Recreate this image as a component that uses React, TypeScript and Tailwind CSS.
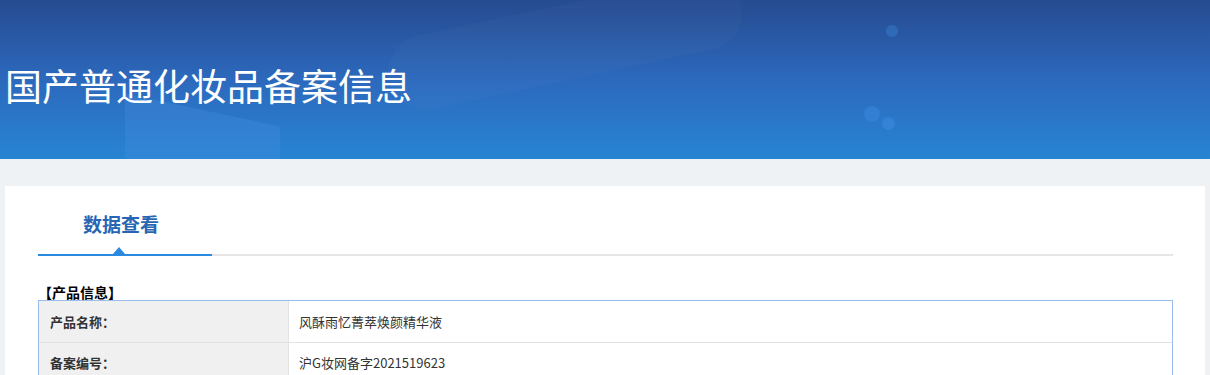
import React from "react";

const rows: [string, string][] = [
  ["产品名称：", "风酥雨忆菁萃焕颜精华液"],
  ["备案编号：", "沪G妆网备字2021519623"],
];

export default function App() {
  return (
    <div
      className="min-h-screen w-[1210px] bg-[#eef2f5]"
      style={{ fontFamily: '"Noto Sans CJK SC", "Noto Sans", sans-serif' }}
    >
      <div className="relative h-[159px] overflow-hidden bg-gradient-to-b from-[#264b90] via-[#2c69bd] to-[#2784d3]">
        <div className="absolute left-[385px] top-[5px] h-[75px] w-[360px] rotate-[-12deg] rounded-full bg-white/[0.02]" />
        <div className="absolute left-[125px] top-[110px] h-[80px] w-[155px] skew-y-[12deg] bg-[#4a8fe0]/30" />
        <div className="absolute left-[886px] top-[25px] h-[12px] w-[12px] rounded-full bg-[#3a86d6]/40" />
        <div className="absolute left-[864px] top-[106px] h-[16px] w-[16px] rounded-full bg-[#3a8ae0]/50" />
        <div className="absolute left-[882px] top-[117px] h-[13px] w-[13px] rounded-full bg-[#3a8ae0]/60" />
        <div className="relative flex h-full items-center pl-[5px] pt-[12px]">
          <h1 className="text-[37px] font-normal leading-none text-white">国产普通化妆品备案信息</h1>
        </div>
      </div>

      <div className="ml-[5px] mt-[27px] w-[1200px] bg-white px-[33px] pb-10 pr-[32px] pt-[24px]">
        <div className="flex border-b-2 border-[#e6e6e6]">
          <div className="relative -mb-[2px] w-[174px] border-b-2 border-[#2a8ae0] pb-[16px] pl-[45px]">
            <span className="text-[19px] font-bold leading-[28px] text-[#2866b3]">数据查看</span>
            <div className="absolute bottom-0 left-[75px] h-0 w-0 border-x-[6px] border-b-[7px] border-x-transparent border-b-[#2a8ae0]" />
          </div>
        </div>

        <div className="mt-[28px] text-[14px] font-bold leading-[16px] text-black">【产品信息】</div>
        <div className="border border-[#9cbde9]">
          {rows.map(([k, v], i) => (
            <div key={i} className={`flex h-[41px] ${i > 0 ? "border-t border-[#e3e3e3]" : ""}`}>
              <div className="flex w-[250px] items-center border-r border-[#e3e3e3] bg-[#f0f0f0] pl-[11px] text-[13px] font-bold text-[#333]">
                {k}
              </div>
              <div className="flex flex-1 items-center pl-[10px] text-[13px] text-[#333]">{v}</div>
            </div>
          ))}
        </div>
      </div>
    </div>
  );
}
